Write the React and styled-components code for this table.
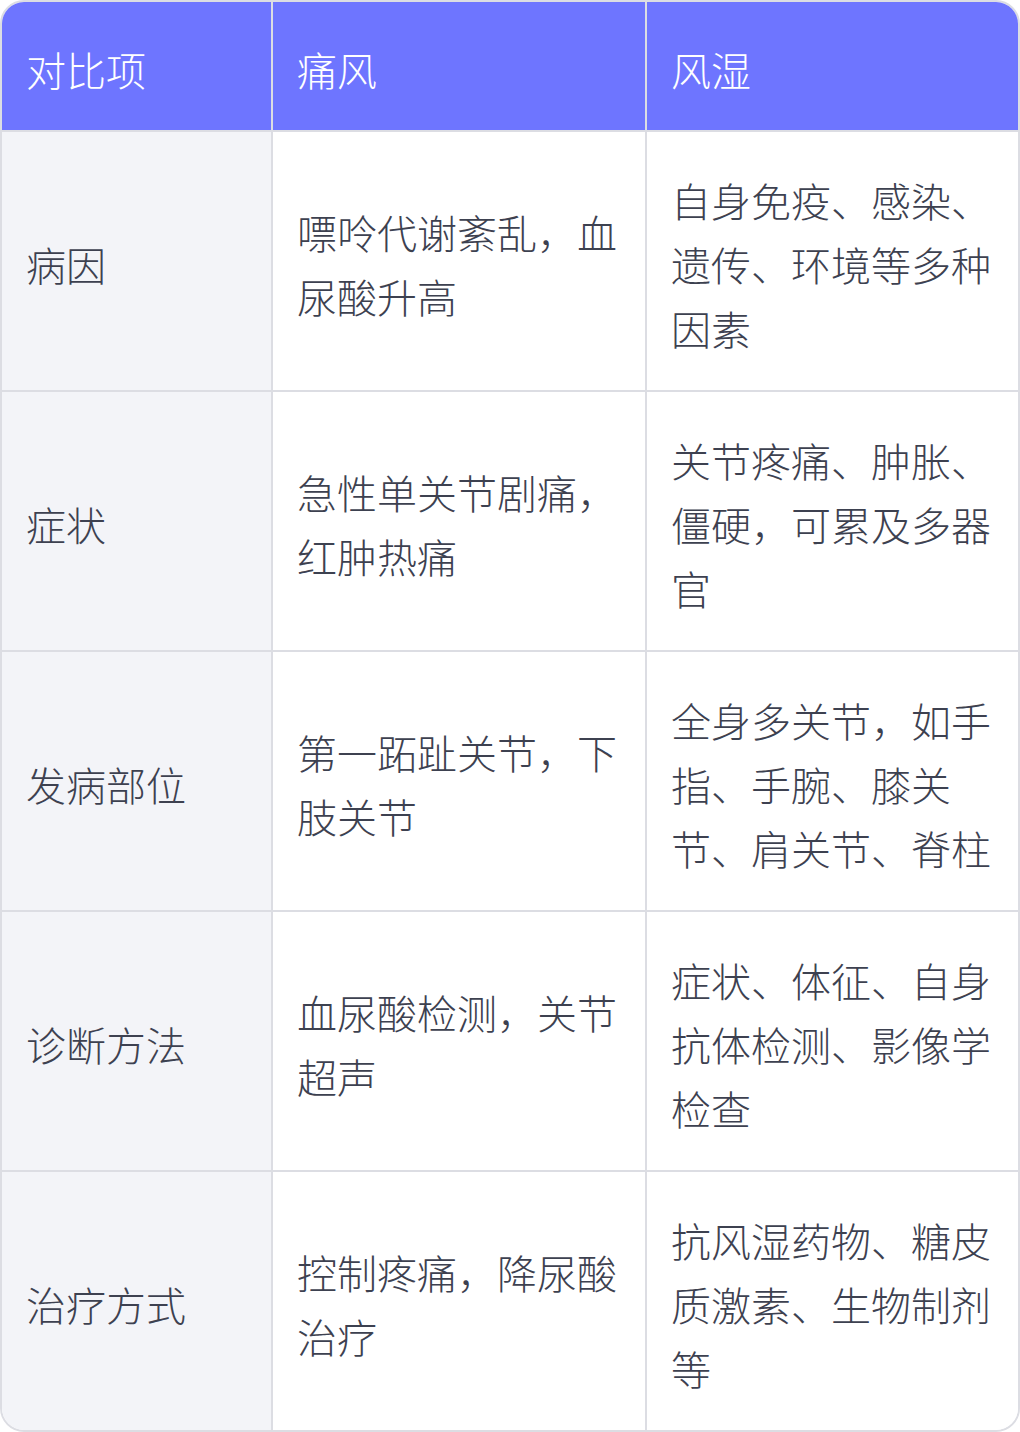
import React from 'react';
import styled, { createGlobalStyle } from 'styled-components';

const GlobalStyle = createGlobalStyle`
  html, body {
    margin: 0;
    padding: 0;
    background: #ffffff;
  }
  body {
    font-family: "Noto Sans CJK SC", "Noto Sans", sans-serif;
  }
`;

const Table = styled.div`
  width: 1020px;
  box-sizing: border-box;
  border: 2px solid #dcdde3;
  border-radius: 24px;
  overflow: hidden;
  display: grid;
  grid-template-columns: 271px 374px 1fr;
`;

const Cell = styled.div`
  box-sizing: border-box;
  display: flex;
  align-items: center;
  padding: ${(p) => (p.$head ? '35px 24px 29px' : '36px 24px 30px')};
  font-size: 40px;
  line-height: 64px;
  font-weight: 300;
  color: ${(p) => (p.$head ? '#ffffff' : '#3d4150')};
  background: ${(p) => (p.$head ? '#6e75ff' : p.$first ? '#f3f4f8' : '#ffffff')};
  border-right: ${(p) => (p.$last ? 'none' : '2px solid #dcdde3')};
  border-bottom: ${(p) => (p.$bottom ? 'none' : '2px solid #dcdde3')};
`;

const header = ['对比项', '痛风', '风湿'];

const rows = [
  ['病因', '嘌呤代谢紊乱，血尿酸升高', '自身免疫、感染、遗传、环境等多种因素'],
  ['症状', '急性单关节剧痛，红肿热痛', '关节疼痛、肿胀、僵硬，可累及多器官'],
  ['发病部位', '第一跖趾关节，下肢关节', '全身多关节，如手指、手腕、膝关节、肩关节、脊柱'],
  ['诊断方法', '血尿酸检测，关节超声', '症状、体征、自身抗体检测、影像学检查'],
  ['治疗方式', '控制疼痛，降尿酸治疗', '抗风湿药物、糖皮质激素、生物制剂等'],
];

export default function App() {
  return (
    <>
      <GlobalStyle />
      <Table>
        {header.map((h, i) => (
          <Cell key={h} $head $last={i === 2}>
            {h}
          </Cell>
        ))}
        {rows.map((row, r) =>
          row.map((text, i) => (
            <Cell
              key={r + '-' + i}
              $first={i === 0}
              $last={i === 2}
              $bottom={r === rows.length - 1}
            >
              {text}
            </Cell>
          ))
        )}
      </Table>
    </>
  );
}
